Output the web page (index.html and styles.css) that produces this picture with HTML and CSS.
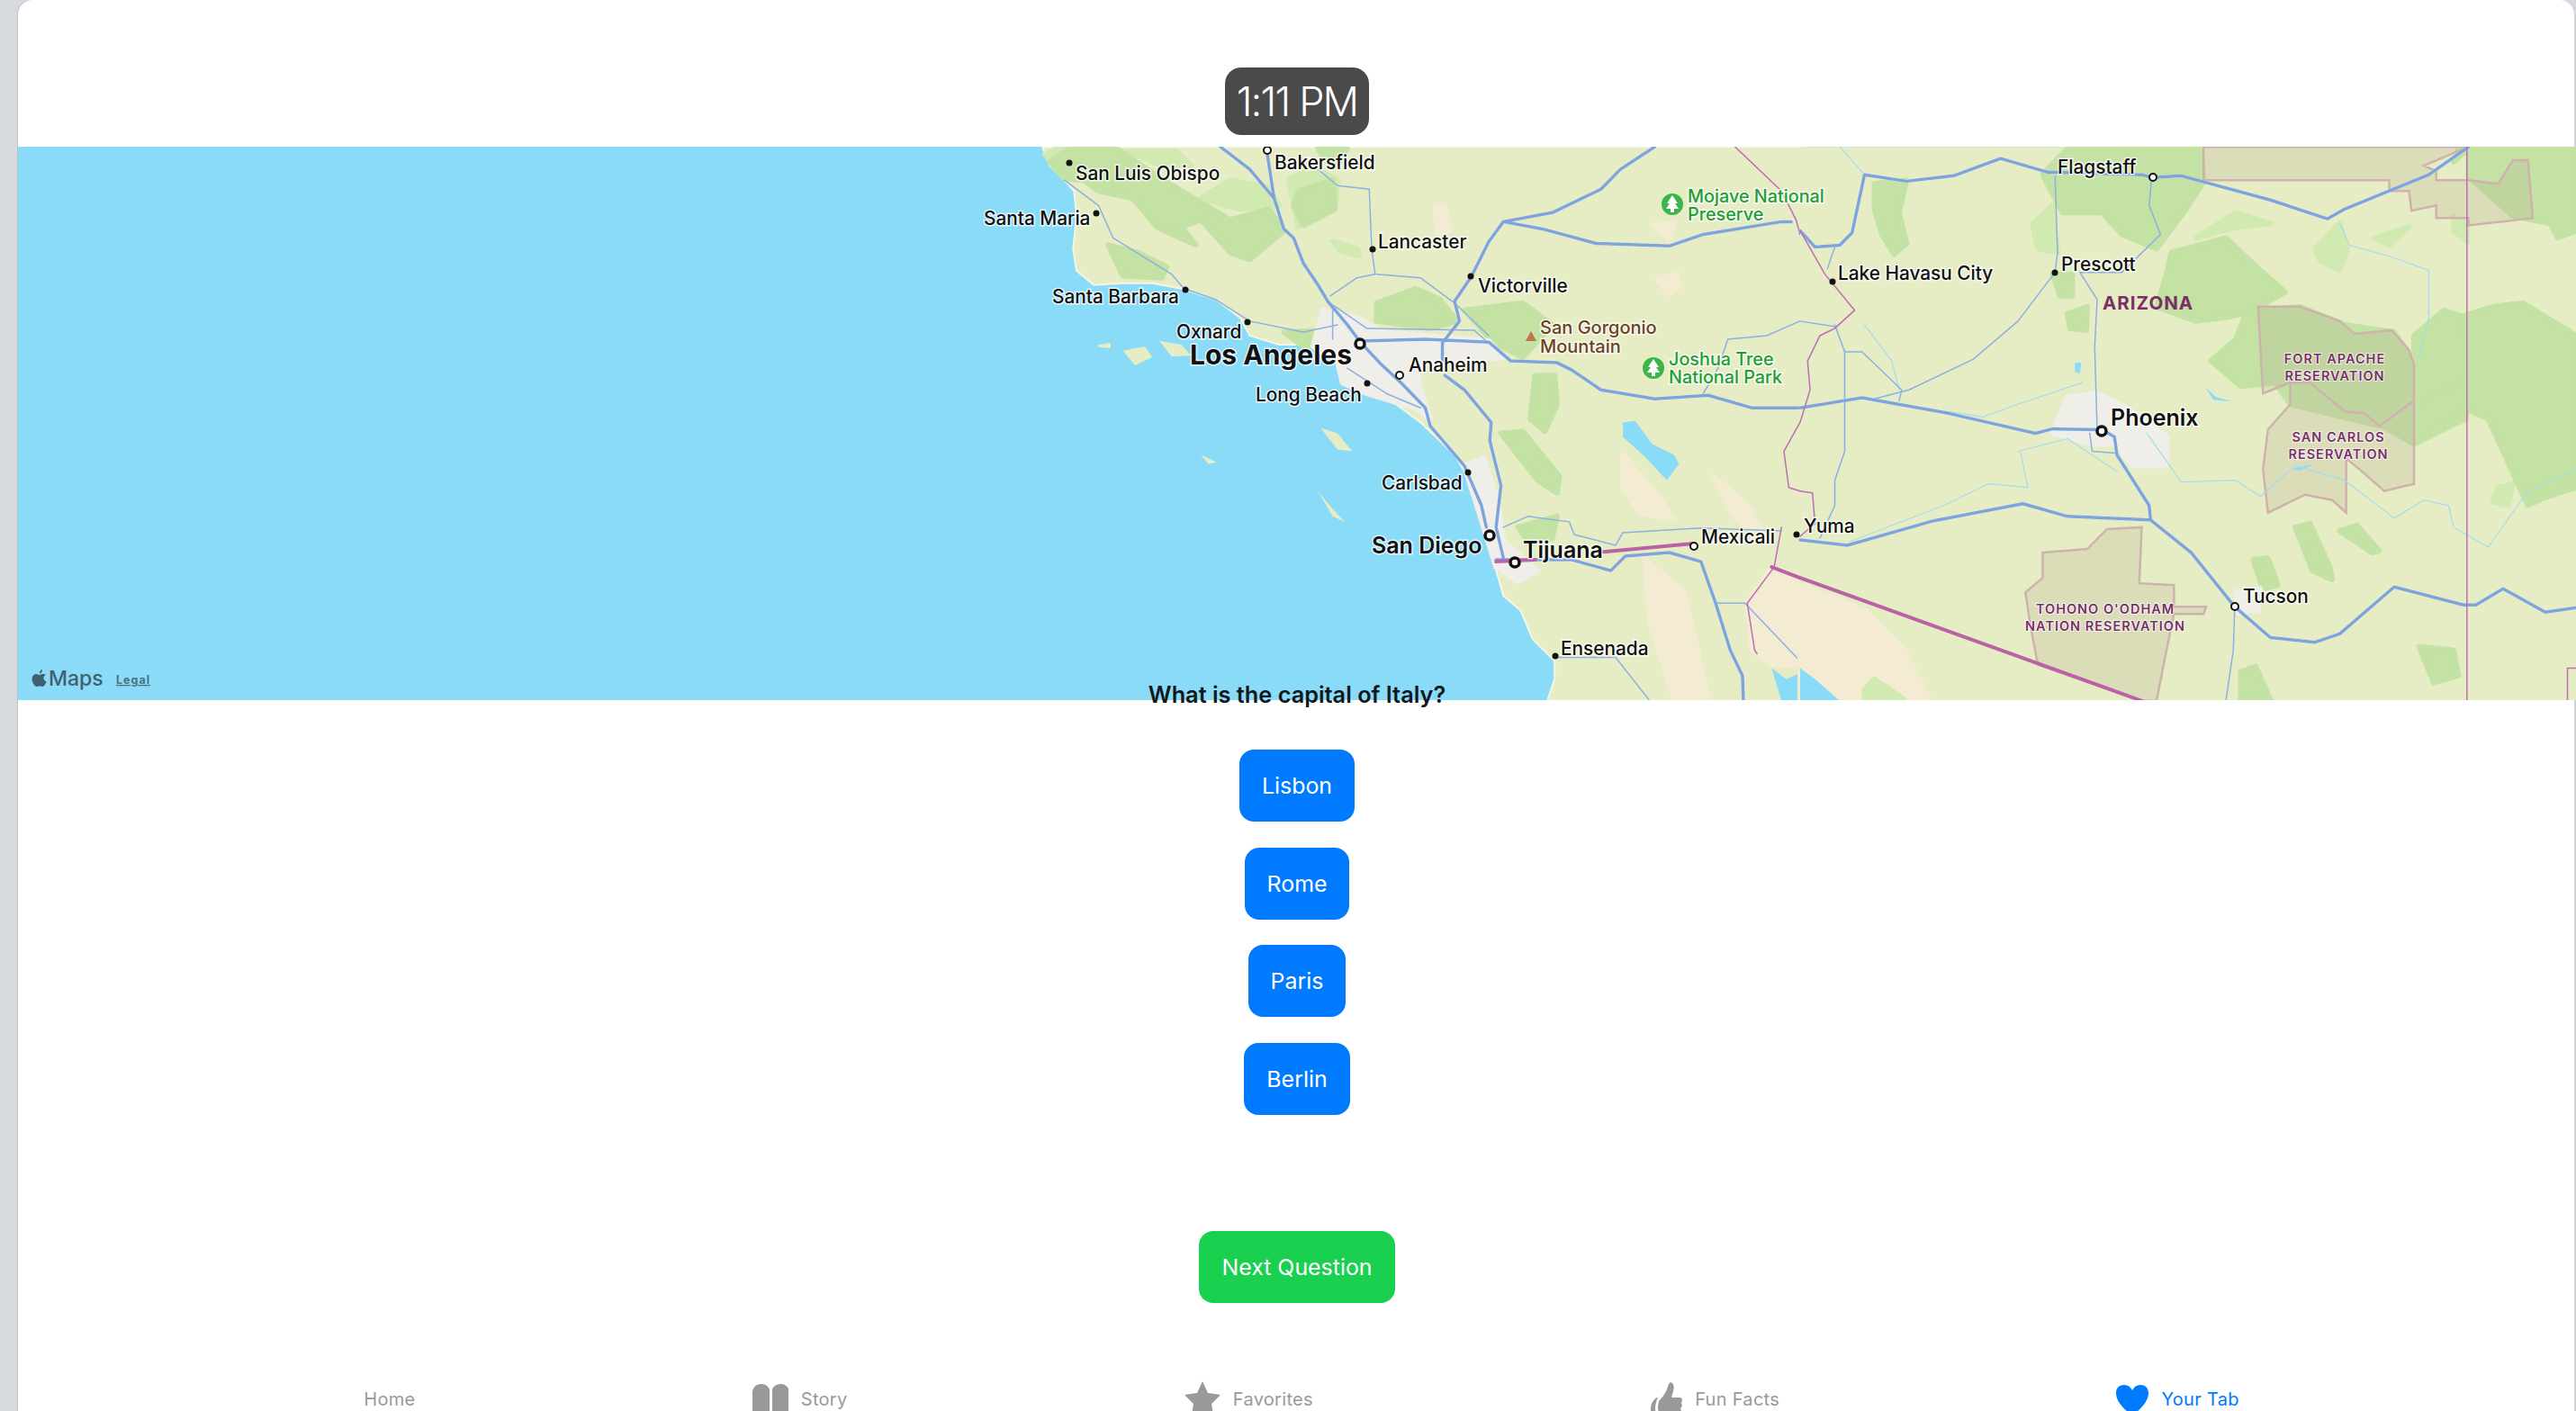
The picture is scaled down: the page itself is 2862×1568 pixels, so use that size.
FILE: index.html
```html
<!DOCTYPE html>
<html lang="en">
<head>
  <meta charset="UTF-8" />
  <meta name="viewport" content="width=device-width, initial-scale=1.0" />
  <title>Quiz</title>
  <link rel="stylesheet" href="styles.css">
</head>
<body>
  <div class="window">
    <header class="top">
      <div class="clock">1:11 PM</div>
    </header>

    <svg class="map" viewBox="20 163 2842 615" xmlns="http://www.w3.org/2000/svg">
      <rect class="water" x="20" y="163" width="2842" height="615" />

      <!-- west half -->
      <g transform="translate(1150 160) scale(.542 .4018)">
        <path class="land coast" d="M15,8 L30,60 L60,100 L80,130 L85,200 L78,290 L85,350 L120,390 L180,385 L240,385 L300,400 L370,430 L420,480 L440,530 L500,555 L560,555 L600,560 L620,600 L630,650 L680,680 L740,720 L790,770 L860,860 L900,950 L915,1040 L940,1100 L945,1180 L960,1250 L995,1290 L1020,1370 L1065,1430 L1065,1480 L1050,1540 L1572,1540 L1572,8 Z" />
        <path class="land" d="M130,555 L155,550 L155,565 L130,562 Z M180,572 L225,560 L240,590 L205,612 Z M255,545 L300,555 L320,585 L280,588 Z M585,785 L620,800 L650,850 L620,845 Z M340,860 L372,880 L355,885 Z M580,960 L610,1010 L635,1045 L610,1030 Z" />
        <path class="pale" d="M520,100 L570,60 L620,100 L615,180 L540,230 Z M610,270 L660,290 L665,310 L625,295 Z M20,30 L50,8 L90,8 L60,70 Z M340,150 L400,100 L480,120 L500,170 L420,180 Z M190,20 L290,20 L320,60 L260,60 Z" />
        <path class="green" d="M30,50 L70,15 L170,15 L240,80 L300,130 L400,210 L480,180 L510,240 L440,320 L400,300 L340,210 L300,230 L330,280 L250,230 L200,150 L130,130 L100,100 L60,95 Z M700,440 L780,400 L830,430 L865,490 L810,510 L700,490 Z M880,460 L1000,440 L1060,500 L1000,590 L940,550 Z M150,280 L210,300 L270,340 L260,370 L180,365 Z M510,520 L600,515 L610,555 L550,560 Z M540,130 L610,100 L615,180 L550,225 L530,170 Z M580,12 L640,12 L620,60 L590,40 Z M1025,640 L1065,640 L1070,720 L1045,795 L1015,760 Z M955,800 L1000,795 L1075,920 L1070,965 L1030,930 Z M990,1060 L1070,1030 L1060,1090 L1010,1100 Z" />
        <path class="sand" d="M1250,1150 L1330,1240 L1380,1536 L1310,1536 L1260,1320 Z M1205,860 L1280,980 L1310,1040 L1240,1020 L1205,950 Z M1390,920 L1460,1000 L1500,1090 L1440,1040 Z M1510,1170 L1568,1200 L1568,1440 L1510,1440 L1470,1400 L1460,1270 Z M1265,225 L1310,220 L1300,265 Z M1275,375 L1315,360 L1320,395 L1300,415 Z M820,175 L840,175 L850,240 L825,245 Z" />
        <path class="urban" d="M590,460 L660,480 L710,520 L930,545 L960,590 L780,610 L790,680 L810,760 L780,730 L680,690 L630,660 L620,600 L570,560 Z M880,890 L920,870 L950,1000 L960,1100 L1030,1180 L990,1210 L945,1170 L915,1040 Z" />
        <path class="lake" d="M1205,770 L1230,765 L1265,830 L1310,860 L1320,885 L1295,930 L1250,865 L1205,810 Z M1510,1450 L1540,1480 L1572,1460 L1572,1540 L1530,1540 Z" />
        <path class="thin" d="M580,70 L620,115 L685,125 L690,290 L697,360 L660,370 L605,420 M610,450 L610,540 M605,440 L680,510 L900,515 L925,545 M700,360 L790,370 L860,440 L930,530 M1568,490 L1500,530 L1420,540 L1400,620 L1370,690 M1070,1420 L1190,1420 L1260,1540 M60,100 L130,170 L160,260 L280,360 L305,400 M305,400 L370,430 L440,490 L550,520 L620,500 M640,620 L720,690 L790,730 M1395,1270 L1455,1270 L1568,1430 M960,1060 L1010,1030 L1095,1045 L1105,1080 L1190,1110 L1205,1075 L1365,1062 L1530,1070" />
        <path class="road" d="M380,8 L440,70 L490,150 L510,235 L530,260 L550,330 L580,390 L600,435 L640,500 L668,550 M475,20 L490,150 M1270,8 L1200,70 L1160,125 L1060,190 L960,215 L930,270 L895,365 L860,435 L870,490 L835,550 L835,600 M960,215 L1040,235 L1150,275 L1300,282 L1370,250 L1530,215 L1550,215 M668,545 L800,540 L930,548 L975,600 L1070,605 L1100,625 L1160,680 L1270,705 L1380,695 L1470,730 L1572,730 M668,550 L710,610 L750,660 L800,730 L810,780 L880,890 L915,1000 L925,1060 M840,640 L880,680 L935,770 L932,820 L955,945 L945,1060 L960,1145 M945,1150 L1100,1150 L1180,1180 L1210,1140 L1300,1130 L1365,1155 L1395,1270 L1425,1400 L1450,1470 L1452,1540" />
        <path class="state" d="M1435,8 L1530,130 L1560,210 L1568,250 M1568,770 L1535,850 L1545,950 L1568,960 M1530,1060 L1515,1170 L1460,1270 L1475,1400 L1480,1410" />
        <path class="nation" d="M945,1155 L1025,1150 M1165,1128 L1350,1105 M1510,1170 L1568,1200" />
      </g>

      <!-- east half -->
      <g transform="translate(2000 160) scale(.55 .4018)">
        <rect class="land" x="0" y="8" width="1580" height="1532" />
        <path class="sand" d="M0,1220 L130,1290 L210,1400 L260,1536 L0,1536 Z M1510,610 L1560,600 L1560,660 L1530,690 Z" />
        <path class="lake" d="M0,1450 L30,1480 L80,1540 L0,1540 Z M145,1510 L175,1505 L190,1540 L145,1540 Z" />
        <path class="pale" d="M130,1510 L150,1480 L210,1536 L130,1536 Z M1040,290 L1090,220 L1105,290 L1090,350 L1050,320 Z M470,220 L510,170 L520,300 L480,290 Z M1160,260 L1230,230 L1190,280 Z M800,260 L880,190 L950,220 L880,230 Z M1320,200 L1348,220 L1348,270 L1320,240 Z M1410,950 L1440,940 L1430,1000 L1400,990 Z M1380,40 L1420,30 L1420,100 L1390,90 Z" />
        <path class="green" d="M150,110 L215,100 L200,190 L215,275 L190,305 L165,250 L150,180 Z M490,85 L540,12 L810,12 L815,105 L780,180 L720,290 L650,250 L610,190 L530,190 Z M750,300 L860,260 L930,350 L980,410 L900,470 L880,540 L830,600 L890,670 L960,660 L990,720 L1110,760 L1170,780 L1240,720 L1345,650 L1345,540 L1330,480 L1400,450 L1460,440 L1568,530 L1568,950 L1500,980 L1470,1000 L1390,760 L1340,730 L1240,830 L1100,720 L1000,650 L940,640 L925,460 L860,480 L800,490 L720,450 L740,360 Z M925,460 L1010,450 L1100,500 L1200,520 L1240,600 L1240,780 L1170,780 L1100,730 L1030,650 L940,640 Z M1240,530 L1300,460 L1345,480 L1345,760 L1240,830 Z M1350,12 L1568,12 L1568,240 L1530,260 L1515,220 L1440,200 L1350,90 Z M1000,1060 L1030,1050 L1070,1170 L1075,1205 L1035,1180 Z M1090,1070 L1125,1055 L1170,1125 L1155,1130 Z M915,1150 L945,1145 L965,1220 L935,1230 Z M540,470 L580,450 L578,515 L545,510 Z M510,360 L550,360 L550,420 L525,420 Z M890,1460 L920,1445 L950,1536 L890,1536 Z M1250,1390 L1320,1400 L1330,1470 L1280,1490 Z M1330,12 L1350,12 L1320,50 Z" />
        <path class="urban" d="M540,700 L600,690 L660,730 L740,810 L740,890 L670,890 L640,830 L590,830 L510,800 Z M880,1240 L930,1230 L925,1290 L885,1295 Z" />
        <path class="res" d="M815,8 L815,100 L1190,100 L1190,130 L1230,130 L1235,185 L1285,170 L1285,205 L1350,205 L1350,225 L1480,205 L1470,45 L1440,45 L1410,110 L1350,100 L1285,100 L1285,75 L1260,60 L1350,8 Z M925,450 L1010,450 L1090,490 L1120,525 L1195,515 L1230,570 L1240,610 L1240,710 L1170,780 L1140,745 L1100,740 L1030,660 L990,660 L935,690 Z M990,660 L990,720 L945,790 L935,900 L945,1020 L1020,970 L1075,985 L1103,1020 L1103,870 L1130,900 L1180,960 L1240,940 L1240,710 L1170,780 L1140,745 L1100,740 L1030,660 Z M490,1130 L580,1120 L620,1065 L690,1060 L685,1215 L755,1220 L755,1280 L820,1280 L815,1300 L755,1300 L740,1400 L720,1540 L690,1540 L480,1440 L465,1330 L455,1240 L490,1200 Z" />
        <path class="lake" d="M555,605 L568,605 L565,635 L555,630 Z M818,672 L840,700 L872,712 L835,708 Z M990,900 L1040,885 L1010,903 Z" />
        <path class="river" d="M130,500 L185,600 L200,680 M570,660 L440,720 L370,755 L300,740 M440,850 L540,815 L640,905 M445,850 L460,950 L380,940 L290,1000 L100,1100 M700,800 L770,935 L880,930 L930,975 L1000,890 L1100,930 L1200,1035 L1260,985 L1310,1000 L1320,1060 L1390,1115 L1470,960 L1568,900 M1090,220 L1110,280 L1190,310 L1270,350 L1270,480 L1250,590 M80,8 L130,85" />
        <path class="thin" d="M515,90 L520,300 L515,355 L440,490 L350,595 L220,680 L150,705 M710,95 L705,170 L728,250 L650,355 L565,355 L600,430 L595,560 L600,790 M90,570 L90,850 L70,930 L70,1000 L40,1090 M70,500 L90,575 L125,575 L205,680 L200,710 M0,490 L70,505 M585,800 L590,850 L635,855 M878,1280 L875,1400 L860,1540 M70,285 L55,345" />
        <path class="road" d="M0,240 L30,285 L80,280 L105,245 L130,85 L215,103 L310,88 L405,40 L500,78 L690,85 L712,93 L770,88 L950,155 L1065,207 L1100,180 L1270,85 L1350,8 M0,730 L125,702 L300,745 L475,800 L510,788 L610,790 L635,810 L640,860 L705,1000 L708,1040 L790,1130 L878,1280 L950,1365 L1040,1378 L1090,1355 L1200,1225 L1340,1275 L1365,1275 L1420,1230 L1505,1295 L1572,1282 M0,1095 L95,1110 L270,1042 L450,995 L540,1030 L705,1040" />
        <path class="state" d="M0,240 L50,360 L110,460 L70,510 L40,530 L15,600 L20,680 L0,770 M0,960 L25,965 L30,1050 L0,1085 M1347,8 L1347,1540 M1550,1540 L1550,1450 L1568,1450" />
        <path class="nation" d="M0,1200 L690,1540" />
      </g>

      <!-- city markers -->
      <g class="dots">
        <circle cx="1188" cy="181" r="3.5" /><circle cx="1218" cy="237" r="3.5" /><circle cx="1317" cy="322" r="3.5" />
        <circle cx="1386" cy="358" r="3.5" /><circle cx="1525" cy="277" r="3.5" /><circle cx="1634" cy="307" r="3.5" />
        <circle cx="1519" cy="426" r="3.5" /><circle cx="1631" cy="525" r="3.5" /><circle cx="1728" cy="729" r="3.5" />
        <circle cx="1996" cy="594" r="3.5" /><circle cx="2036" cy="313" r="3.5" /><circle cx="2283" cy="303" r="3.5" />
      </g>
      <g class="rings">
        <circle cx="1408" cy="167" r="4" /><circle cx="1555" cy="417" r="4" /><circle cx="1882" cy="607" r="4" />
        <circle cx="2392" cy="197" r="4" /><circle cx="2483" cy="674" r="4" />
      </g>
      <g class="rings big">
        <circle cx="1511" cy="382" r="5" /><circle cx="1655" cy="595" r="5" /><circle cx="1683" cy="625" r="5" /><circle cx="2335" cy="479" r="5" />
      </g>

      <!-- park markers -->
      <circle class="park" cx="1858" cy="227" r="12" /><path class="tree" d="M1858 217l6 9h-3l4 6h-5v4h-4v-4h-5l4-6h-3z" />
      <circle class="park" cx="1837" cy="409" r="12" /><path class="tree" d="M1837 399l6 9h-3l4 6h-5v4h-4v-4h-5l4-6h-3z" />
      <path class="peak" d="M1707 379l-6 -11-6 11z" />

      <g class="label">
        <text x="1195" y="200">San Luis Obispo</text>
        <text x="1093" y="250">Santa Maria</text>
        <text x="1169" y="337">Santa Barbara</text>
        <text x="1307" y="376">Oxnard</text>
        <text x="1395" y="446">Long Beach</text>
        <text x="1416" y="188">Bakersfield</text>
        <text x="1531" y="276">Lancaster</text>
        <text x="1642" y="325">Victorville</text>
        <text x="1565" y="413">Anaheim</text>
        <text x="1535" y="544">Carlsbad</text>
        <text x="1890" y="604">Mexicali</text>
        <text x="1734" y="728">Ensenada</text>
        <text x="2004" y="592">Yuma</text>
        <text x="2286" y="193">Flagstaff</text>
        <text x="2042" y="311">Lake Havasu City</text>
        <text x="2290" y="301">Prescott</text>
        <text x="2492" y="670">Tucson</text>
      </g>
      <g class="label major">
        <text class="la" x="1322" y="405">Los Angeles</text>
        <text x="1524" y="615">San Diego</text>
        <text x="1692" y="620">Tijuana</text>
        <text x="2345" y="473">Phoenix</text>
      </g>
      <g class="label nature">
        <text x="1875" y="225">Mojave National</text>
        <text x="1875" y="245">Preserve</text>
        <text x="1854" y="406">Joshua Tree</text>
        <text x="1854" y="426">National Park</text>
      </g>
      <g class="label peak-name">
        <text x="1711" y="371">San Gorgonio</text>
        <text x="1711" y="392">Mountain</text>
      </g>
      <text class="state-name" x="2336" y="344">ARIZONA</text>
      <g class="label reserve">
        <text x="2594" y="404">FORT APACHE</text>
        <text x="2594" y="423">RESERVATION</text>
        <text x="2598" y="491">SAN CARLOS</text>
        <text x="2598" y="510">RESERVATION</text>
        <text x="2339" y="682">TOHONO O'ODHAM</text>
        <text x="2339" y="701">NATION RESERVATION</text>
      </g>

      <!-- attribution -->
      <path class="brand" d="M48 749c-2-.2-3.400 1-4.300 1-1 0-2.300-1-3.500-.9-2.700.1-4.600 2.500-4.600 5.500 0 4 3 8.400 5.100 8.400 1 0 1.800-.8 3.200-.8s2 .8 3.200.8c1.800 0 3.600-3 4.400-5.300-2-.9-3-2.400-3-4.100 0-1.800 1-3.200 2.400-3.800-.7-.4-1.500-.7-2.400-.8zM44 748.500c1.800-.4 3.300-2.200 3-4.500-1.800.3-3.300 2.200-3 4.500z" />
      <text class="brand-name" x="54" y="762">Maps</text>
      <text class="legal" x="129" y="760">Legal</text>
    </svg>

    <main class="quiz">
      <h2 class="question">What is the capital of Italy?</h2>
      <div class="answers">
        <button class="btn">Lisbon</button>
        <button class="btn">Rome</button>
        <button class="btn">Paris</button>
        <button class="btn">Berlin</button>
      </div>
      <button class="btn next">Next Question</button>
    </main>

    <nav class="tabs">
      <a class="tab">Home</a>
      <a class="tab">
        <svg class="tab-icon" viewBox="0 0 40 40"><path d="M0 13C0 7 4 3 9.500 3c4 0 8 2 9.500 6v27c-2-2-5-3-9-3-4 0-8 1-10 3zM41 13c0-6-4-10-9.500-10-4 0-8 2-9.500 6v27c2-2 5-3 9-3 4 0 8 1 10 3z" /></svg>
        Story
      </a>
      <a class="tab">
        <svg class="tab-icon" viewBox="0 0 40 40"><path d="M20 0l6 13 14 2-10 10 2.500 15-12.500-7-12.500 7 2.500-15-10-10 14-2z" /></svg>
        Favorites
      </a>
      <a class="tab">
        <svg class="tab-icon narrow" viewBox="0 0 36 40"><path d="M8 18c-4 2-7 7-7 13 0 4 1 7 2 9h5c-1-3-2-6-2-9 0-5 1-9 3-13zM11 21C16 16 19 10 21 3c1-2 3-2 4-1 2 2 2 6 1 9l-2 7h9c2 0 3 1 3 3l-1 3 1 3-2 3 1 3-2 3v4H13c-2-3-4-6-4-11 0-4 1-7 2-9z" /></svg>
        Fun Facts
      </a>
      <a class="tab active">
        <svg class="tab-icon narrow" viewBox="0 0 36 40"><path d="M18 38C6 29 0 21 0 13 0 7 4 4 9 4c4 0 7 2 9 6 2-4 5-6 9-6 5 0 9 3 9 9 0 8-6 16-18 25z" /></svg>
        Your Tab
      </a>
    </nav>
  </div>
</body>
</html>
```

FILE: styles.css
```css
html, body {
  margin: 0;
  height: 100%;
  overflow: hidden;
}
body {
  background-color: #d6d9de;
  font-family: Inter, "Liberation Sans", sans-serif;
}
.window {
  margin-left: 20px;
  height: 1568px;
  background-color: #fff;
  border-radius: 16px 16px 0 0;
  box-shadow: -1px 0 0 #bfc1c5, inset -2px 0 0 #cfd2d6;
  overflow: hidden;
}
.top {
  display: flex;
  justify-content: center;
  align-items: flex-start;
  height: 163px;
  padding-top: 75px;
  box-sizing: border-box;
}
.clock {
  width: 160px;
  height: 75px;
  display: flex;
  align-items: center;
  justify-content: center;
  background-color: #4a4a4a;
  border-radius: 18px;
  color: #fff;
  font-size: 45px;
  font-weight: 300;
  letter-spacing: -1.800px;
}

/* map */
.map {
  display: block;
  width: 2842px;
  height: 615px;
}
.water { fill: #8adbf8; }
.land { fill: #e6edc5; }
.coast { stroke: #f4f6e4; stroke-width: 2px; vector-effect: non-scaling-stroke; }
.pale { fill: #d0eab1; stroke: #d0eab1; }
.green { fill: #c3e2a3; stroke: #c3e2a3; }
.sand { fill: #f3ecd3; stroke: #f3ecd3; }
.urban { fill: #f0eee8; stroke: #f0eee8; }
.pale, .green, .sand, .urban { stroke-width: 6px; stroke-linejoin: round; vector-effect: non-scaling-stroke; }
.lake { fill: #8adbf8; }
.res { fill: #b0a48c; fill-opacity: .22; stroke: #cfb2ae; stroke-width: 2.500px; vector-effect: non-scaling-stroke; }
.road, .thin, .river, .state, .nation { fill: none; stroke-linejoin: round; stroke-linecap: round; vector-effect: non-scaling-stroke; }
.road { stroke: #7da5dc; stroke-width: 3.500px; filter: drop-shadow(0 0 1px #fff); }
.thin { stroke: #8db0e2; stroke-width: 1.500px; }
.river { stroke: #a4dcec; stroke-width: 1.200px; }
.state { stroke: #bb6fb0; stroke-width: 1.500px; }
.nation { stroke: #bb62a6; stroke-width: 4px; }
.dots circle { fill: #111; }
.rings circle { fill: #fff; stroke: #111; stroke-width: 2px; }
.rings.big circle { stroke-width: 3.500px; }
.park { fill: #3cb54a; }
.tree { fill: #fff; }
.peak { fill: #c0724a; }
.label text {
  font-family: Inter, "Liberation Sans", sans-serif;
  font-size: 20.800px;
  font-weight: 500;
  fill: #111;
  stroke: rgba(255, 255, 255, .75);
  stroke-width: 3px;
  paint-order: stroke;
}
.label.major text { font-size: 25px; font-weight: 600; }
.label.major .la { font-size: 30px; font-weight: 700; }
.label.nature text { font-size: 19.800px; fill: #1f9e34; }
.label.peak-name text { font-size: 20px; fill: #6b4322; }
.label.reserve text {
  font-size: 14.500px;
  font-weight: 600;
  letter-spacing: 1px;
  fill: #7a2f68;
  text-anchor: middle;
  stroke-width: 2px;
}
.state-name {
  font-size: 20.500px;
  font-weight: 700;
  letter-spacing: 1px;
  fill: #7a2f68;
}
.brand { fill: #41606e; }
.brand-name {
  font-size: 23px;
  font-weight: 500;
  fill: #41606e;
}
.legal {
  font-size: 12.500px;
  font-weight: 700;
  letter-spacing: 1px;
  fill: #4a7082;
  text-decoration: underline;
}

/* quiz */
.quiz {
  display: flex;
  flex-direction: column;
  align-items: center;
}
.question {
  margin: -22px 0 0;
  position: relative;
  font-size: 25.300px;
  line-height: 32px;
  font-weight: 600;
  color: #11181c;
}
.answers {
  display: flex;
  flex-direction: column;
  align-items: center;
  gap: 28.500px;
  margin-top: 45px;
}
.btn {
  height: 80px;
  padding: 0 25px;
  border: none;
  border-radius: 16px;
  background-color: #007aff;
  color: #fff;
  font-family: inherit;
  font-size: 24.900px;
  font-weight: 400;
}
.next {
  margin-top: 129px;
  background-color: #19d04f;
}

/* tab bar */
.tabs {
  display: flex;
  justify-content: space-evenly;
  align-items: center;
  height: 40px;
  margin-top: 87px;
  padding-left: 10px;
}
.tab {
  display: flex;
  align-items: center;
  gap: 14px;
  font-size: 20px;
  letter-spacing: .3px;
  color: #999;
}
.tab-icon {
  width: 40px;
  height: 40px;
  fill: #999;
}
.tab-icon.narrow { width: 36px; }
.tab.active { color: #007aff; }
.tab.active .tab-icon { fill: #007aff; }
```
